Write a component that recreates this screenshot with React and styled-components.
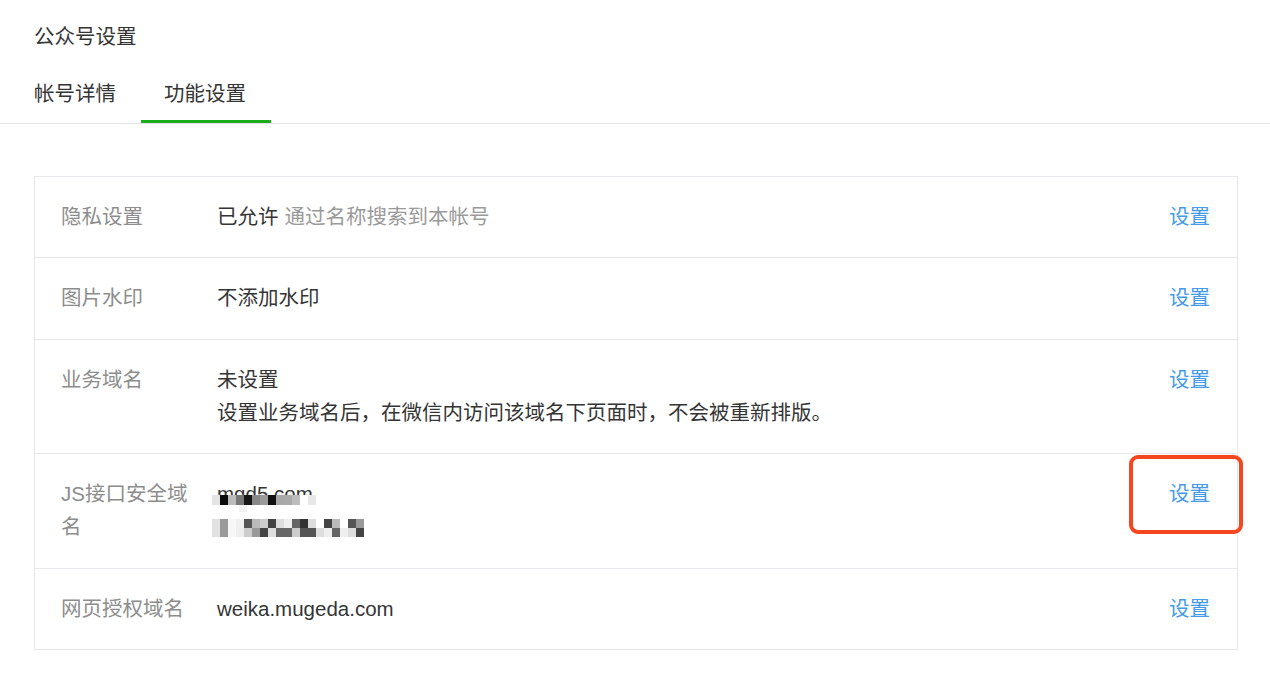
import React from "react";
import styled, { createGlobalStyle, css } from "styled-components";

const GlobalStyle = createGlobalStyle`
	body {
		margin: 0;
		background: #fff;
		font-family: "Liberation Sans", "Noto Sans CJK SC", sans-serif;
		color: #353535;
	}
`;

const Page = styled.div`
	width: 1270px;
	min-height: 682px;
	background: #fff;
`;

const Title = styled.h2`
	margin: 20px 0 0 34px;
	height: 33px;
	font-size: 20.5px;
	font-weight: 400;
	line-height: 33px;
	color: #353535;
`;

const Tabs = styled.div`
	display: flex;
	padding-left: 11px;
	border-bottom: 1px solid #e4e4e8;
`;

const Tab = styled.a`
	display: block;
	height: 33px;
	padding: 24px 25px 10px 23px;
	font-size: 20.5px;
	line-height: 33px;
	color: #353535;
	border-bottom: 3px solid ${(props) => (props.active ? "#1aad19" : "transparent")};
	cursor: pointer;
`;

const Table = styled.div`
	margin: 52px 32px 0 34px;
	border: 1px solid #e7e7eb;
`;

const Row = styled.div`
	display: flex;
	align-items: flex-start;
	padding: 23px 27px ${(props) => (props.extra ? 25 : 24)}px 26px;
	border-bottom: 1px solid #e7e7eb;
	font-size: 20.5px;
	line-height: 33px;
	&:last-child {
		border-bottom: none;
	}
`;

const Label = styled.div`
	width: 132px;
	margin-right: 24px;
	flex-shrink: 0;
	color: #8d8d8d;
`;

const Value = styled.div`
	flex: 1;
	position: relative;
	color: #353535;
`;

const Line = styled.div`
	height: 33px;
	white-space: nowrap;
`;

const Hint = styled.span`
	color: #9a9a9a;
	margin-left: 6px;
`;

const Mosaic = styled.svg`
	position: absolute;
	left: -5px;
	top: 18px;
`;

const Action = styled.a`
	position: relative;
	height: 33px;
	color: #459ae9;
	cursor: pointer;
	${(props) =>
		props.highlighted &&
		css`
			&::after {
				content: "";
				position: absolute;
				left: -40px;
				right: -33px;
				top: -22px;
				bottom: -24px;
				border: 4px solid #f4461f;
				border-radius: 9px;
			}
		`}
`;

// blurred-out domain list, cells of 8px
const topCells = ["#e4e4e4", "#0c0c0c", "#bbbbbb", "#777777", "#161616", "#888888", "#9a9a9a", "#111111", "#a8a8a8", "#aaaaaa", "#bcbcbc", "#ffffff", "#e8e8e8"];
const upperCells = ["#e2e2e2", "#999999", "#f7f7f7", "#f0f0f0", "#555555", "#bbbbbb", "#cccccc", "#444444", "#dddddd", "#eeeeee", "#666666", "#333333", "#dddddd", "#ffffff", "#444444", "#bbbbbb", "#ffffff", "#555555", "#999999"];
const lowerCells = ["#e2e2e2", "#999999", "#f7f7f7", "#eeeeee", "#cccccc", "#999999", "#444444", "#dddddd", "#666666", "#666666", "#cccccc", "#555555", "#555555", "#dddddd", "#eeeeee", "#666666", "#eeeeee", "#dddddd", "#444444"];

const BlurredDomains = () => (
	<Mosaic width="160" height="42" viewBox="0 0 160 42">
		{topCells.map((c, i) => (
			<rect key={"t" + i} x={i * 8} y="0" width="8" height="10" fill={c} />
		))}
		<rect x="27" y="10" width="8" height="7" fill="#f2f2f2" />
		{upperCells.map((c, i) => (
			<rect key={"u" + i} x={i * 8} y="24" width="8" height="9" fill={c} />
		))}
		{lowerCells.map((c, i) => (
			<rect key={"l" + i} x={i * 8} y="33" width="8" height="9" fill={c} />
		))}
	</Mosaic>
);

const rows = [
	{
		label: "隐私设置",
		lines: [
			<>
				已允许<Hint>通过名称搜索到本帐号</Hint>
			</>,
		],
	},
	{ label: "图片水印", lines: ["不添加水印"], extra: true },
	{
		label: "业务域名",
		lines: ["未设置", "设置业务域名后，在微信内访问该域名下页面时，不会被重新排版。"],
	},
	{ label: "JS接口安全域名", lines: ["mgd5.com", ""], blurred: true, highlighted: true, extra: true },
	{ label: "网页授权域名", lines: ["weika.mugeda.com"] },
];

const App = () => {
	return (
		<Page>
			<GlobalStyle />
			<Title>公众号设置</Title>
			<Tabs>
				<Tab>帐号详情</Tab>
				<Tab active>功能设置</Tab>
			</Tabs>
			<Table>
				{rows.map((row, index) => (
					<Row key={index} extra={row.extra}>
						<Label>{row.label}</Label>
						<Value>
							{row.lines.map((line, i) => (
								<Line key={i}>{line}</Line>
							))}
							{row.blurred && <BlurredDomains />}
						</Value>
						<Action highlighted={row.highlighted}>设置</Action>
					</Row>
				))}
			</Table>
		</Page>
	);
};

export default App;
